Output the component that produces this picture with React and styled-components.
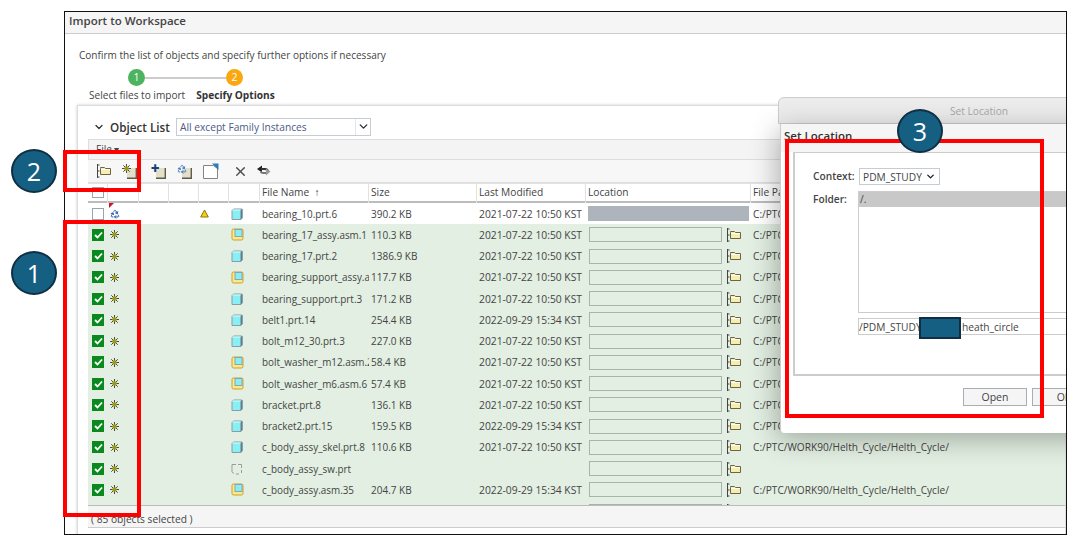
import styled, { createGlobalStyle } from 'styled-components';
import { Recycle, X, ChevronDown } from 'lucide-react';

const rows = [
  { name: 'bearing_10.prt.6', size: '390.2 KB', date: '2021-07-22 10:50 KST', type: 'part', fresh: true },
  { name: 'bearing_17_assy.asm.1', size: '110.3 KB', date: '2021-07-22 10:50 KST', type: 'asm' },
  { name: 'bearing_17.prt.2', size: '1386.9 KB', date: '2021-07-22 10:50 KST', type: 'part' },
  { name: 'bearing_support_assy.a', size: '117.7 KB', date: '2021-07-22 10:50 KST', type: 'asm' },
  { name: 'bearing_support.prt.3', size: '171.2 KB', date: '2021-07-22 10:50 KST', type: 'part' },
  { name: 'belt1.prt.14', size: '254.4 KB', date: '2022-09-29 15:34 KST', type: 'part' },
  { name: 'bolt_m12_30.prt.3', size: '227.0 KB', date: '2021-07-22 10:50 KST', type: 'part' },
  { name: 'bolt_washer_m12.asm.2', size: '58.4 KB', date: '2021-07-22 10:50 KST', type: 'asm' },
  { name: 'bolt_washer_m6.asm.6', size: '57.4 KB', date: '2021-07-22 10:50 KST', type: 'asm' },
  { name: 'bracket.prt.8', size: '136.1 KB', date: '2021-07-22 10:50 KST', type: 'part' },
  { name: 'bracket2.prt.15', size: '159.5 KB', date: '2022-09-29 15:34 KST', type: 'part' },
  { name: 'c_body_assy_skel.prt.8', size: '110.6 KB', date: '2021-07-22 10:50 KST', type: 'part' },
  { name: 'c_body_assy_sw.prt', size: '', date: '', type: 'ghost', noPath: true },
  { name: 'c_body_assy.asm.35', size: '204.7 KB', date: '2022-09-29 15:34 KST', type: 'asm' },
  { name: '', size: '', date: '', type: 'none', noPath: true },
];

const columns = '20px 31px 30px 30px 30px 31px 109px 108px 109px 165px 1fr';

function Sparkle() {
  return (
    <svg width="9" height="9" viewBox="0 0 9 9">
      <path d="M4.5 0v9M0 4.5h9M1.3 1.3l6.4 6.4M7.7 1.3l-6.4 6.4" stroke="#4a4a38" strokeWidth="1" />
      <circle cx="4.5" cy="4.5" r="2.3" fill="#9a9a18" />
    </svg>
  );
}

function FolderTree() {
  return (
    <svg width="16" height="14" viewBox="0 0 16 14">
      <path d="M1.5 0v14M1.5 1h2M1.5 7h2M1.5 13h2" stroke="#444" strokeWidth="1" fill="none" />
      <path d="M4.5 4.5V3.5h4l1 1h5v6h-10z" fill="#f6eeb0" stroke="#6d6542" strokeWidth="1" />
      <path d="M5 5.5h9" stroke="#fff" strokeWidth="1" />
    </svg>
  );
}

function PartIcon() {
  return (
    <svg width="12" height="12" viewBox="0 0 12 12">
      <path d="M1 2.5 2.5 1H11v9l-1 1.5H1z" fill="#88f0f4" stroke="#8c9ca4" strokeWidth="1" />
      <path d="M9.5 2v9.5L11.5 10V1z" fill="#5f7f8c" />
      <path d="M1.5 2h8" stroke="#d5fbfc" strokeWidth="1" />
    </svg>
  );
}

function AsmIcon() {
  return (
    <svg width="13" height="13" viewBox="0 0 13 13">
      <rect x="1" y="1" width="11" height="11" rx="1.5" fill="#fbe88c" stroke="#cf9f2c" strokeWidth="1" />
      <rect x="4" y="1.5" width="7" height="7" fill="#88eef4" stroke="#8aa5ac" strokeWidth="1" />
    </svg>
  );
}

function GhostIcon() {
  return (
    <svg width="12" height="12" viewBox="0 0 12 12">
      <path d="M1 1.5h4M7 1.5h3.5V5M10.5 7v3M8 11H5M3 10.500 1 9V1.500" stroke="#9a9a9a" strokeWidth="1" fill="#f0f3ee" />
    </svg>
  );
}

function WarnIcon() {
  return (
    <svg width="9" height="9" viewBox="0 0 9 9">
      <path d="M4.500 1 8.300 8H.7z" fill="#f6d200" stroke="#8a7420" strokeWidth="1" />
    </svg>
  );
}

function TanBox() {
  return (
    <svg width="10" height="11" viewBox="0 0 10 11">
      <path d="M0 0h9v10H0z" fill="#e3dfc8" />
      <path d="M9.300 0v10.300H0" stroke="#5c5c48" strokeWidth="1.400" fill="none" />
    </svg>
  );
}

function BlueCornerDoc() {
  return (
    <svg width="16" height="16" viewBox="0 0 16 16">
      <path d="M.5 2.500h10l4 3v10H.5z" fill="#fff" stroke="#85857c" strokeWidth="1" />
      <path d="M9 .5h6.500V7z" fill="#2b7cc0" />
    </svg>
  );
}

function SwapArrows() {
  return (
    <svg width="14" height="12" viewBox="0 0 14 12">
      <path d="M0 4 5 .5V7.500z" fill="#222" />
      <path d="M4 4h4a3 3 0 0 1 3 3" stroke="#333" strokeWidth="1.800" fill="none" />
      <path d="M13.500 6.500 9 3.500v7z" fill="#999" />
      <path d="M9 8H6a3 3 0 0 1-2.500-1.500" stroke="#777" strokeWidth="1.800" fill="none" />
    </svg>
  );
}

const typeIcons = {
  part: <PartIcon />,
  asm: <AsmIcon />,
  ghost: <GhostIcon />,
  none: null,
};

function Row({ row }) {
  return (
    <RowGrid $fresh={row.fresh}>
      <Cell $pad={4}>{row.fresh ? <CheckBox /> : <CheckBox $on><svg width="9" height="8" viewBox="0 0 9 8"><path d="M1 4l2.500 2.500L8 1.500" stroke="#fff" strokeWidth="1.800" fill="none" /></svg></CheckBox>}</Cell>
      <Cell $pad={2}>
        {row.fresh ? <><Flag /><Recycle size={10} color="#2158ad" strokeWidth={2.4} /></> : <Sparkle />}
      </Cell>
      <Cell />
      <Cell />
      <Cell $pad={1}>{row.fresh && <WarnIcon />}</Cell>
      <Cell $pad={2}>{typeIcons[row.type]}</Cell>
      <NameCell>{row.name}</NameCell>
      <SizeCell>{row.size}</SizeCell>
      <TextCell>{row.date}</TextCell>
      <Cell $pad={3}>
        {row.fresh ? <LockedLocation /> : <><LocationInput /><FolderSlot><FolderTree /></FolderSlot></>}
      </Cell>
      <PathCell>{row.noPath ? '' : 'C:/PTC/WORK90/Helth_Cycle/Helth_Cycle/'}</PathCell>
    </RowGrid>
  );
}

export default function App() {
  return (
    <Stage>
      <GlobalStyle />
      <Frame>
        <TitleBar>Import to Workspace</TitleBar>
        <Intro>Confirm the list of objects and specify further options if necessary</Intro>
        <StepTrack>
          <StepDot $color="#4cb35f">1</StepDot>
          <StepLine />
          <StepDot $color="#f9a90f">2</StepDot>
        </StepTrack>
        <StepLabels>
          <span>Select files to import</span>
          <strong>Specify Options</strong>
        </StepLabels>
        <Panel>
          <PanelHead>
            <ChevronDown size={12} strokeWidth={2.6} color="#333" />
            <PanelTitle>Object List</PanelTitle>
            <FilterSelect>
              <span>All except Family Instances</span>
              <SelectArrow><ChevronDown size={13} strokeWidth={2.6} color="#333" /></SelectArrow>
            </FilterSelect>
          </PanelHead>
          <MenuBar>File ▾</MenuBar>
          <Toolbar>
            <ToolButton><FolderTree /></ToolButton>
            <ToolButton $shift={-1}><IconStack><TanBox /><Corner><Sparkle /></Corner></IconStack></ToolButton>
            <ToolButton $shift={2}><IconStack><TanBox /><Corner $color="#17407c">+</Corner></IconStack></ToolButton>
            <ToolButton><IconStack><TanBox /><Corner><Recycle size={10} color="#2c70c4" strokeWidth={2.2} /></Corner></IconStack></ToolButton>
            <ToolButton><BlueCornerDoc /></ToolButton>
            <ToolButton $shift={3}><X size={15} color="#4f4f4f" strokeWidth={2.4} /></ToolButton>
            <ToolButton $shift={-3}><SwapArrows /></ToolButton>
          </Toolbar>
          <HeaderRow>
            <HeadCell><HeadBox /></HeadCell>
            <HeadCell />
            <HeadCell />
            <HeadCell />
            <HeadCell />
            <HeadCell />
            <HeadCell>File Name&nbsp;&nbsp;↑</HeadCell>
            <HeadCell>Size</HeadCell>
            <HeadCell>Last Modified</HeadCell>
            <HeadCell>Location</HeadCell>
            <HeadCell>File Path</HeadCell>
          </HeaderRow>
          <RowsClip>
            {rows.map((row, i) => <Row key={i} row={row} />)}
          </RowsClip>
          <Footer>( 85 objects selected )</Footer>
        </Panel>

        <Dialog>
          <DialogTitle>Set Location</DialogTitle>
          <DialogBody>
            <DialogHeading>Set Location</DialogHeading>
            <FormPanel>
              <FormLabel>Context:</FormLabel>
              <ContextSelect>PDM_STUDY <ChevronDown size={11} strokeWidth={3} color="#222" /></ContextSelect>
              <FormLabel>Folder:</FormLabel>
              <FolderList><FolderItem>/.</FolderItem></FolderList>
              <span />
              <PathInput>
                <PathStart>/PDM_STUDY</PathStart>
                <Redaction />
                <span>heath_circle</span>
              </PathInput>
            </FormPanel>
            <ButtonRow>
              <DialogButton>Open</DialogButton>
              <DialogButton>OK</DialogButton>
            </ButtonRow>
          </DialogBody>
        </Dialog>
      </Frame>

      <RedBox $x={63} $y={220} $w={78} $h={297} />
      <RedBox $x={63} $y={150} $w={78} $h={42} />
      <RedBox $x={785} $y={139} $w={259} $h={279} />
      <Badge $x={11} $y={149}>2</Badge>
      <Badge $x={11} $y={251}>1</Badge>
      <Badge $x={897} $y={109}>3</Badge>
    </Stage>
  );
}

const GlobalStyle = createGlobalStyle`
  html, body {
    margin: 0;
    background: #fff;
  }
  body {
    font-family: "Open Sans", "Liberation Sans", sans-serif;
    color: #444;
    overflow: hidden;
  }
  * { box-sizing: border-box; }
  svg { display: block; flex: none; }
`;

const Stage = styled.div`
  position: relative;
  width: 1076px;
  height: 540px;
  padding: 11px 0 0 64px;
`;

const Frame = styled.div`
  position: relative;
  width: 1003px;
  height: 524px;
  border: 1px solid #111;
  overflow: hidden;
`;

const TitleBar = styled.div`
  height: 22px;
  padding-left: 4px;
  background: #f5f5f5;
  border-bottom: 1px solid #ccc;
  font-size: 11.5px;
  font-weight: 600;
  line-height: 18px;
  color: #444;
`;

const Intro = styled.div`
  margin: 14px 0 0 14px;
  font-size: 10.050px;
  line-height: 14px;
`;

const StepTrack = styled.div`
  display: flex;
  align-items: center;
  margin: 7px 0 0 63px;
`;

const StepDot = styled.div`
  width: 17px;
  height: 17px;
  border-radius: 50%;
  background: ${(p) => p.$color};
  color: #fff;
  font-size: 10.500px;
  line-height: 17px;
  text-align: center;
`;

const StepLine = styled.div`
  width: 81px;
  height: 2px;
  background: #ccc;
`;

const StepLabels = styled.div`
  display: flex;
  gap: 11px;
  margin: 2px 0 0 24px;
  font-size: 10.100px;
  line-height: 14px;
  strong { font-weight: 700; color: #333; font-size: 10.150px; }
`;

const Panel = styled.div`
  height: 440px;
  margin: 3px 0 0 12px;
  padding-left: 10px;
  border: 1px solid #ddd;
  box-shadow: 0 0 3px rgba(0, 0, 0, .2);
`;

const PanelHead = styled.div`
  display: flex;
  align-items: flex-start;
  height: 33px;
  padding: 12px 0 0 5px;
  > svg { margin-top: 3px; }
`;

const PanelTitle = styled.div`
  width: 61px;
  margin: 0 5px 0 5px;
  font-size: 11.700px;
  font-weight: 600;
  line-height: 18px;
  color: #333;
  white-space: nowrap;
`;

const FilterSelect = styled.div`
  display: flex;
  justify-content: space-between;
  width: 195px;
  height: 18px;
  padding-left: 3px;
  border: 1px solid #c5ccd3;
  font-size: 10.200px;
  line-height: 16px;
  color: #4b5a86;
`;

const SelectArrow = styled.div`
  display: flex;
  justify-content: center;
  width: 15px;
  border-left: 1px solid #e3e6ea;
  svg { margin-top: 1px; }
`;

const MenuBar = styled.div`
  height: 21px;
  padding-left: 7px;
  background: #f4f4f4;
  border: 1px solid #ddd;
  border-right: 0;
  font-size: 10px;
  line-height: 19px;
`;

const Toolbar = styled.div`
  display: flex;
  align-items: center;
  height: 23px;
  padding-left: 3px;
  background: #f7f7f7;
  border-bottom: 1px solid #ddd;
`;

const ToolButton = styled.div`
  display: flex;
  align-items: center;
  justify-content: center;
  width: 26.500px;
  height: 16px;
  margin-left: ${(p) => p.$shift || 0}px;
`;

const IconStack = styled.div`
  position: relative;
  display: flex;
  align-items: flex-end;
  justify-content: flex-end;
  width: 15px;
  height: 15px;
`;

const Corner = styled.div`
  position: absolute;
  left: 0;
  top: 0;
  display: flex;
  color: ${(p) => p.$color || 'inherit'};
  font-size: 15px;
  font-weight: 800;
  line-height: 9px;
`;

const HeaderRow = styled.div`
  display: grid;
  grid-template-columns: ${columns};
  height: 20px;
  background: #e2e2e2;
  padding-top: 1px;
`;

const HeadCell = styled.div`
  position: relative;
  margin-right: 1px;
  padding-left: 2px;
  background: #fff;
  border-bottom: 2px solid #bcbcbc;
  font-size: 10.200px;
  line-height: 16px;
  white-space: nowrap;
`;

const HeadBox = styled.div`
  width: 12px;
  height: 11px;
  margin: 3px 0 0 2px;
  border: 1px solid #9aa4ad;
  background: #fff;
`;

const RowsClip = styled.div`
  height: 302px;
  overflow: hidden;
  background: #e2efe2;
`;

const RowGrid = styled.div`
  display: grid;
  grid-template-columns: ${columns};
  height: 21.250px;
  align-items: center;
  background: ${(p) => (p.$fresh ? '#fff' : '#e2efe2')};
`;

const Cell = styled.div`
  position: relative;
  display: flex;
  align-items: center;
  height: 100%;
  padding-left: ${(p) => p.$pad || 0}px;
`;

const TextCell = styled.div`
  padding-left: 2px;
  overflow: hidden;
  font-size: 10.300px;
  white-space: nowrap;
`;

const NameCell = styled(TextCell)`
  padding-right: 2px;
  font-size: 9.900px;
`;

const SizeCell = styled(TextCell)`
  font-size: 10px;
`;

const PathCell = styled(TextCell)`
  font-size: 10.150px;
`;

const CheckBox = styled.div`
  display: flex;
  align-items: center;
  justify-content: center;
  width: 12px;
  height: 12px;
  background: ${(p) => (p.$on ? '#0a8a1e' : '#fff')};
  border: 1px solid ${(p) => (p.$on ? '#0a8a1e' : '#9aa4ad')};
`;

const Flag = styled.div`
  position: absolute;
  left: 1px;
  top: 0;
  border-top: 5px solid #c8142a;
  border-right: 5px solid transparent;
`;

const LockedLocation = styled.div`
  width: 161px;
  height: 15px;
  margin-left: -1px;
  background: #adb4bb;
`;

const LocationInput = styled.div`
  width: 133px;
  height: 15px;
  background: #e2efe2;
  border: 1px solid #a9b3ab;
`;

const FolderSlot = styled.div`
  display: flex;
  margin-left: 4px;
`;

const Footer = styled.div`
  height: 23px;
  padding-left: 3px;
  background: #f5f5f5;
  border-top: 1px solid #bbb;
  border-bottom: 1px solid #ccc;
  font-size: 10.200px;
  line-height: 26px;
`;

const Dialog = styled.div`
  position: absolute;
  left: 713px;
  top: 85px;
  width: 360px;
  height: 336px;
  display: flex;
  flex-direction: column;
`;

const DialogTitle = styled.div`
  height: 27px;
  padding-left: 42px;
  background: #ececec;
  border: 1px solid #ccc;
  border-radius: 6px 0 0 0;
  color: #a8a8a8;
  font-size: 10.200px;
  line-height: 26px;
  text-align: center;
`;

const DialogBody = styled.div`
  flex: 1;
  margin-left: 2px;
  background: #fff;
  border-left: 1px solid #ccc;
  border-radius: 0 0 0 4px;
  box-shadow: -2px 6px 28px rgba(0, 0, 0, .3);
`;

const DialogHeading = styled.div`
  height: 28px;
  padding-left: 3px;
  background: #f5f5f5;
  color: #333;
  font-size: 11.500px;
  font-weight: 600;
  line-height: 24px;
`;

const FormPanel = styled.div`
  display: grid;
  grid-template-columns: 45px 1fr;
  align-content: start;
  row-gap: 6px;
  height: 224px;
  margin-left: 12px;
  padding: 15px 0 0 18px;
  background: #fff;
  border: 1px solid #ccc;
  border-width: 1px 0 2px 2px;
  font-size: 10.200px;
`;

const FormLabel = styled.div`
  font-weight: 600;
  color: #444;
  line-height: 16px;
`;

const ContextSelect = styled.div`
  display: flex;
  align-items: center;
  justify-content: space-between;
  width: 81px;
  height: 17px;
  margin-left: 1px;
  padding: 0 3px;
  border: 1px solid #c5ccd3;
`;

const FolderList = styled.div`
  height: 122px;
  border: 1px solid #ccc;
  border-width: 1px 0 1px 1px;
  background: #fff;
`;

const FolderItem = styled.div`
  height: 15px;
  padding-left: 1px;
  background: #c8c8c8;
  line-height: 15px;
`;

const PathInput = styled.div`
  display: flex;
  align-items: center;
  height: 17px;
  margin-top: -1px;
  border: 1px solid #ccc;
  border-width: 1px 0 1px 1px;
`;

const PathStart = styled.span`
  flex: none;
  width: 60px;
  white-space: nowrap;
`;

const Redaction = styled.div`
  flex: none;
  width: 42px;
  height: 22px;
  margin: 2px 1px 0 0;
  background: #156082;
  border: 2px solid #0f2f44;
`;

const ButtonRow = styled.div`
  display: flex;
  gap: 5px;
  margin: 12px 0 0 182px;
`;

const DialogButton = styled.div`
  flex: none;
  width: 64px;
  height: 18px;
  background: #f5f5f5;
  border: 1px solid #a9aeb3;
  color: #444;
  font-size: 10.500px;
  line-height: 16px;
  text-align: center;
`;

const RedBox = styled.div`
  position: absolute;
  left: ${(p) => p.$x}px;
  top: ${(p) => p.$y}px;
  width: ${(p) => p.$w}px;
  height: ${(p) => p.$h}px;
  border: 4px solid #f00;
`;

const Badge = styled.div`
  position: absolute;
  left: ${(p) => p.$x}px;
  top: ${(p) => p.$y}px;
  width: 46px;
  height: 44px;
  border-radius: 50%;
  background: #156082;
  border: 2px solid #0f2f44;
  color: #fff;
  font-size: 25px;
  line-height: 40px;
  text-align: center;
`;
